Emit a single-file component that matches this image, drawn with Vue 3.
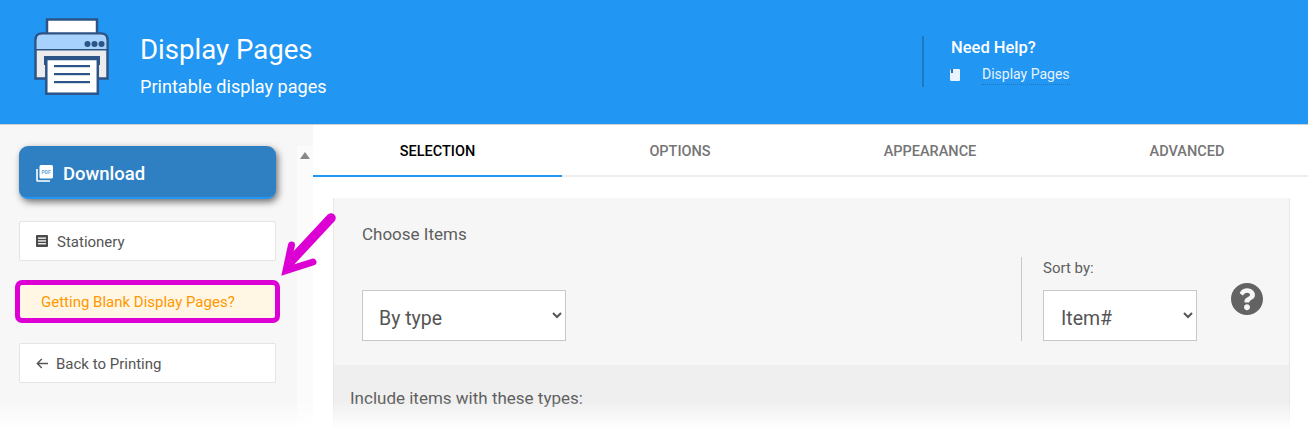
<script setup>
const tabs = ['SELECTION', 'OPTIONS', 'APPEARANCE', 'ADVANCED']
</script>

<template>
  <div class="page">
    <header class="header">
      <svg class="logo" width="76" height="78" viewBox="0 0 76 78">
        <rect x="13" y="2.500" width="50" height="18" fill="#fff" stroke="#2d5487" stroke-width="2.500" />
        <path d="M1.500 61.500V23q0-6.500 6.500-6.500h59q6.500 0 6.500 6.500v38.500z" fill="#ececec" stroke="#2d5487" stroke-width="2.500" />
        <path d="M2.800 32V23q0-5.200 5.200-5.200h59q5.200 0 5.200 5.200v9z" fill="#a6d2fd" />
        <rect x="2" y="32" width="72" height="1.500" fill="#2d5487" />
        <circle cx="53.500" cy="27" r="3" fill="#2d5487" />
        <circle cx="60.500" cy="27" r="3" fill="#2d5487" />
        <circle cx="67.500" cy="27" r="3" fill="#2d5487" />
        <rect x="10" y="39" width="56" height="9" fill="#2d5487" />
        <rect x="12.300" y="42" width="51.500" height="34.700" fill="#fff" stroke="#2d5487" stroke-width="2.500" />
        <rect x="20" y="48" width="36" height="2.200" fill="#2d5487" />
        <rect x="20" y="56" width="36" height="2.200" fill="#2d5487" />
        <rect x="20" y="64" width="36" height="2.200" fill="#2d5487" />
      </svg>
      <div class="titles">
        <h1>Display Pages</h1>
        <p>Printable display pages</p>
      </div>
      <div class="help">
        <div class="help-title">Need Help?</div>
        <div class="help-row">
          <svg width="10" height="12" viewBox="0 0 10 12">
            <path d="M1.500 0H9q1 0 1 1v10q0 1-1 1H1.500Q0 12 0 10.500v-9Q0 0 1.500 0z" fill="#e8f3fe" />
            <rect x="1" y="0" width="2" height="4" fill="#2a6db0" />
          </svg>
          <a class="help-link">Display Pages</a>
        </div>
      </div>
    </header>

    <div class="body">
      <aside class="side">
        <div class="side-main">
          <button class="download">
            <svg width="17" height="17" viewBox="0 0 17 17">
              <path d="M1 4v11.500q0 .5.500.5H14" fill="none" stroke="#fff" stroke-width="1.600" />
              <rect x="3.500" y="0" width="13.500" height="13.500" rx="1.500" fill="#fff" />
              <text x="10.200" y="9" class="pdf">PDF</text>
            </svg>
            <span>Download</span>
          </button>
          <a class="side-btn">
            <svg width="12" height="12" viewBox="0 0 12 12">
              <rect width="12" height="12" rx="1" fill="#4a4a4a" />
              <rect x="2" y="2.500" width="8" height="1.300" fill="#fff" />
              <rect x="2" y="5.300" width="8" height="1.300" fill="#fff" />
              <rect x="2" y="8.100" width="8" height="1.300" fill="#fff" />
            </svg>
            <span>Stationery</span>
          </a>
          <div class="blank">Getting Blank Display Pages?</div>
          <a class="side-btn back">
            <svg width="12" height="11" viewBox="0 0 12 11">
              <path d="M12 5.500H1.500M5.800 1L1.300 5.500l4.500 4.500" fill="none" stroke="#555" stroke-width="1.400" />
            </svg>
            <span>Back to Printing</span>
          </a>
        </div>
        <div class="side-scroll"><i class="scroll-up"></i></div>
      </aside>

      <main class="main">
        <nav class="tabs">
          <div v-for="(t, i) in tabs" :key="t" class="tab" :class="{ active: i === 0 }">{{ t }}</div>
        </nav>
        <section class="panel">
          <div class="choose">
            <div class="choose-left">
              <label class="choose-label">Choose Items</label>
              <select class="sel sel-type"><option>By type</option></select>
            </div>
            <div class="sort">
              <label class="sort-label">Sort by:</label>
              <select class="sel sel-sort"><option>Item#</option></select>
            </div>
            <svg class="q" width="32" height="32" viewBox="8 8 496 496">
              <path fill="#636363" d="M504 256c0 136.997-111.043 248-248 248S8 392.997 8 256C8 119.083 119.043 8 256 8s248 111.083 248 248zM262.655 90c-54.497 0-89.255 22.957-116.549 63.758-3.536 5.286-2.353 12.415 2.715 16.258l34.699 26.31c5.205 3.947 12.621 3.008 16.665-2.122 17.864-22.658 30.113-35.797 57.303-35.797 20.429 0 45.698 13.148 45.698 32.958 0 14.976-12.363 22.667-32.534 33.976C247.128 238.528 216 254.941 216 296v4c0 6.627 5.373 12 12 12h56c6.627 0 12-5.373 12-12v-1.333c0-28.462 83.186-29.647 83.186-106.667 0-58.002-60.165-102-116.531-102zM256 338c-25.365 0-46 20.635-46 46 0 25.364 20.635 46 46 46s46-20.636 46-46c0-25.365-20.635-46-46-46z" />
            </svg>
          </div>
          <div class="include">Include items with these types:</div>
        </section>
      </main>
    </div>

    <div class="fade"></div>
    <svg class="arrow" width="64" height="70" viewBox="0 0 64 70">
      <path d="M52 8L11 52" fill="none" stroke="#dd00d5" stroke-width="9.500" stroke-linecap="round" />
      <path d="M12.500 35L7 60.500L34 52" fill="none" stroke="#dd00d5" stroke-width="7" stroke-linecap="round" stroke-linejoin="miter" />
    </svg>
  </div>
</template>

<style scoped>
.page {
  position: relative;
  width: 1308px;
  height: 429px;
  overflow: hidden;
  background: #fff;
  font-family: Roboto, "Liberation Sans", sans-serif;
  color: #555;
}
.header {
  height: 124px;
  box-sizing: content-box;
  background: #2196f3;
  border-bottom: 1px solid #d0d0d0;
  display: flex;
  align-items: flex-start;
  color: #fff;
}
.logo {
  margin: 17px 0 0 34px;
  flex: none;
}
.titles {
  margin-left: 30px;
  width: 782px;
  flex: none;
}
.titles h1 {
  margin: 32px 0 0;
  font-size: 27.600px;
  line-height: 36px;
  font-weight: 400;
}
.titles p {
  margin: 7px 0 0;
  font-size: 18.100px;
  line-height: 24px;
}
.help {
  margin-top: 36px;
  height: 51px;
  box-sizing: border-box;
  border-left: 2px solid #1e78c2;
  padding: 0 0 0 27px;
}
.help-title {
  font-size: 16.500px;
  font-weight: 500;
  line-height: 24px;
}
.help-row {
  display: flex;
  align-items: center;
  margin: 4px 0 0 -1px;
}
.help-link {
  margin-left: 22px;
  font-size: 14px;
  line-height: 20px;
  color: #e8f3fe;
  border-bottom: 1px dotted #1e78c2;
}
.body {
  display: flex;
  height: 304px;
}
.side {
  width: 313px;
  flex: none;
  background: #f7f7f7;
  display: flex;
}
.side-main {
  width: 297px;
  flex: none;
  box-sizing: border-box;
  padding: 21px 21px 0 19px;
  display: flex;
  flex-direction: column;
}
.side-scroll {
  flex: 1;
  margin-top: 21px;
  background: #fbfbfb;
}
.scroll-up {
  display: block;
  width: 0;
  height: 0;
  margin: 6px 0 0 3px;
  border-left: 5px solid transparent;
  border-right: 5px solid transparent;
  border-bottom: 7px solid #888;
}
.download {
  height: 53px;
  border: 0;
  border-bottom: 2px solid #2196f3;
  border-radius: 9px;
  background: #2f80c2;
  color: #fff;
  font: 500 18.500px Roboto, sans-serif;
  display: flex;
  align-items: center;
  gap: 10px;
  padding: 4px 0 0 17px;
  box-shadow: 2px 3px 7px rgba(0, 0, 0, 0.55);
}
.pdf {
  font: 700 5px Roboto, sans-serif;
  fill: #6ea6d6;
  text-anchor: middle;
}
.side-btn {
  height: 40px;
  box-sizing: border-box;
  margin-top: 22px;
  background: #fff;
  border: 1px solid #e4e4e4;
  border-radius: 2px;
  display: flex;
  align-items: center;
  gap: 9px;
  padding: 2px 0 0 16px;
  font-size: 15px;
  color: #555;
}
.side-btn svg {
  margin-top: -2px;
}
.side-btn.back {
  margin-top: 20px;
  gap: 8px;
}
.blank {
  height: 43px;
  box-sizing: border-box;
  margin: 19px -4px 0;
  border: 5px solid #dd00d5;
  border-radius: 7px;
  background: #fff6e3;
  color: #ff9800;
  font-size: 15px;
  line-height: 35px;
  padding-left: 21px;
}
.main {
  flex: 1;
  min-width: 0;
}
.tabs {
  display: flex;
  height: 52px;
  box-sizing: border-box;
  border-bottom: 2px solid #eee;
}
.tab {
  flex: none;
  text-align: center;
  font-size: 14.500px;
  font-weight: 500;
  line-height: 54px;
  color: #757575;
  height: 52px;
  box-sizing: border-box;
}
.tab:nth-child(1) { width: 249px; }
.tab:nth-child(2) { width: 236px; }
.tab:nth-child(3) { width: 264px; }
.tab:nth-child(4) { width: 246px; padding-left: 4px; }
.tab.active {
  color: #000;
  border-bottom: 2px solid #2196f3;
}
.panel {
  margin: 21px 18px 0 20px;
  border-left: 1px solid #e8e8e8;
  border-right: 1px solid #e8e8e8;
  background: #f6f6f6;
}
.choose {
  height: 167px;
  box-sizing: border-box;
  display: flex;
  align-items: flex-start;
  padding: 0 0 0 28px;
}
.choose-left {
  width: 659px;
  flex: none;
}
.choose-label {
  display: block;
  margin-top: 26px;
  font-size: 17px;
  line-height: 20px;
  color: #5e5e5e;
}
.sel {
  display: block;
  height: 51px;
  box-sizing: border-box;
  border: 1px solid #c8c8c8;
  border-radius: 0;
  background: #fff;
  font: 19.500px Roboto, sans-serif;
  color: #555;
  padding: 6px 12px 0;
  outline: none;
}
.sel-type {
  width: 204px;
  margin-top: 46px;
}
.sort {
  margin-top: 59px;
  height: 84px;
  border-left: 1px solid #c8c8c8;
  padding-left: 21px;
  width: 176px;
  flex: none;
  box-sizing: content-box;
}
.sort-label {
  display: block;
  font-size: 15px;
  line-height: 20px;
  margin-top: 1px;
  color: #5e5e5e;
}
.sel-sort {
  width: 154px;
  margin-top: 12px;
  padding-left: 13px;
}
.q {
  flex: none;
  margin: 85px 0 0 12px;
}
.include {
  background: #efefef;
  height: 70px;
  padding: 23px 0 0 16px;
  box-sizing: border-box;
  font-size: 17px;
  line-height: 20px;
  color: #5e5e5e;
}
.fade {
  position: absolute;
  left: 0;
  right: 0;
  bottom: 0;
  height: 29px;
  background: linear-gradient(to bottom, rgba(255, 255, 255, 0), #fff);
}
.arrow {
  position: absolute;
  left: 279px;
  top: 210px;
}
</style>

<style>
html, body { margin: 0; overflow: hidden; }
</style>
